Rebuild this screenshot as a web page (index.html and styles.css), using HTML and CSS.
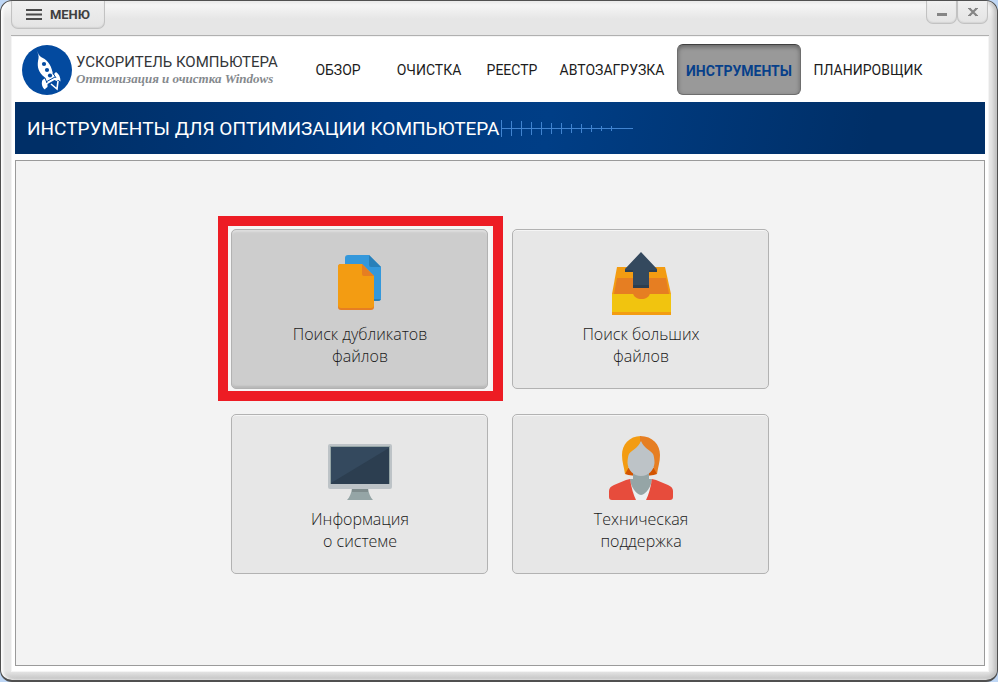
FILE: index.html
```html
<!DOCTYPE html>
<html lang="ru">
<head>
<meta charset="utf-8">
<title>Ускоритель компьютера</title>
<link rel="stylesheet" href="styles.css">
</head>
<body>
<div class="window">
  <header class="titlebar">
    <button class="tab menu" type="button">
      <svg width="16" height="11" viewBox="0 0 16 11"><path d="M0 1h16M0 5.500h16M0 10h16" stroke="#4a4a4a" stroke-width="1.800"/></svg>
      МЕНЮ
    </button>
    <div class="controls">
      <button class="tab control" type="button" aria-label="Свернуть"><svg width="10" height="10" viewBox="0 0 10 10"><path d="M0 7.500h10" stroke="#858585" stroke-width="3"/></svg></button>
      <button class="tab control" type="button" aria-label="Закрыть"><svg width="10" height="10" viewBox="0 0 10 10"><path d="M1.500 1.500l7 7M8.500 1.500l-7 7" stroke="#858585" stroke-width="2.200"/><path d="M0 1.500h3M7 1.500h3M0 8.500h3M7 8.500h3" stroke="#858585"/></svg></button>
    </div>
  </header>
  <main class="content">
    <div class="top">
      <a class="brand" href="#">
        <svg width="50" height="50" viewBox="0 0 50 50">
          <circle cx="25" cy="25" r="25" fill="#034a9f"/>
          <path fill="#fff" d="M14.500 5C16 8.500 17 10.500 19 12c5 2 10 7 11.500 15l.5 3 3-3c3 2 4.500 5 4.500 9.500l-2-1.500-2 1-2-1-7 4v3l-2 1.500-.5 1c-3-2-4-6-2.500-9.500l3-2-3-2.500c-5-5-5.500-11-4-17 .5-3-.5-5-2-8.500z"/>
          <g fill="#034a9f"><circle cx="22" cy="19" r="2.100"/><circle cx="25" cy="25" r="2.100"/><circle cx="28" cy="30.500" r="2.100"/></g>
          <path d="M24 37l9-5M23 33l2 5M31 28l3 5" stroke="#034a9f" fill="none"/>
          <path d="M29 39l6 5 1-8" stroke="#fff" stroke-width="1.600" fill="none"/>
        </svg>
        <span class="brand-text">
          <span class="brand-name">УСКОРИТЕЛЬ КОМПЬЮТЕРА</span>
          <span class="brand-sub">Оптимизация и очистка Windows</span>
        </span>
      </a>
      <nav class="nav">
        <a href="#">ОБЗОР</a>
        <a href="#">ОЧИСТКА</a>
        <a href="#">РЕЕСТР</a>
        <a href="#">АВТОЗАГРУЗКА</a>
        <a class="active" href="#" aria-current="page">ИНСТРУМЕНТЫ</a>
        <a href="#">ПЛАНИРОВЩИК</a>
      </nav>
    </div>
    <div class="banner">
      <h1>ИНСТРУМЕНТЫ ДЛЯ ОПТИМИЗАЦИИ КОМПЬЮТЕРА</h1>
      <svg width="132" height="18" viewBox="0 0 132 18" shape-rendering="crispEdges"><path d="M0 9.500h132M.5 1v17M10.500 2v15M20.500 2v15M30.500 3v13M40.500 3v13M50.500 4v11M60.500 4v11M70.500 5v9M80.500 5v9M90.500 6v7M100.500 7v5M110.500 7v5" stroke="#4184d0" fill="none"/></svg>
    </div>
    <section class="panel">
      <div class="tiles">
        <button class="tile selected" type="button">
          <svg width="64" height="64" viewBox="0 0 64 64">
            <path d="M20 4h21l12 12v31q0 3-3 3H20q-3 0-3-3V7q0-3 3-3z" fill="#3498db"/>
            <path d="M41 4l12 12H43q-2 0-2-2z" fill="#2980b9"/>
            <path d="M46 48h7q-.5 2-3 2h-4z" fill="#2980b9"/>
            <path d="M13 15h21l12 12v29q0 3-3 3H13q-3 0-3-3V16q0-3 3-3z" fill="#e67e22"/>
            <path d="M13 13h21l12 12v29q0 3-3 3H13q-3 0-3-3V16q0-3 3-3z" fill="#f39c12"/>
            <path d="M34 13l12 12H36q-2 0-2-2z" fill="#e67e22"/>
          </svg>
          <span>Поиск дубликатов<br>файлов</span>
          <i class="marker"></i>
        </button>
        <button class="tile" type="button">
          <svg width="64" height="64" viewBox="-1 0 64 64">
            <path d="M7 16h48l6 27v21H2V43z" fill="#f39c12"/>
            <path d="M7 27h49l3 16H4z" fill="#e67e22"/>
            <path d="M2 43h59v18H2z" fill="#f1c40f"/>
            <path d="M23 42h17c-1 8-16 8-17 0z" fill="#e67e22"/>
            <path d="M31 4l16 15v2h-8v16H23V21h-8v-2z" fill="#2c3e50"/>
            <path d="M31 1l16 17v1h-8v15H23V19h-8v-1z" fill="#34495e"/>
          </svg>
          <span>Поиск больших<br>файлов</span>
        </button>
        <button class="tile" type="button">
          <svg width="64" height="64" viewBox="0 0 64 64">
            <path d="M24 52h16q1 8 5 12H19q4-4 5-12z" fill="#95a5a6"/>
            <path d="M24 53h16v3H24z" fill="#7f8c8d"/>
            <rect y="8" width="64" height="45" rx="2" fill="#bdc3c7"/>
            <path d="M2 10h60v38H2z" fill="#95a5a6"/>
            <path d="M3 11h58v37H3z" fill="#34495e"/>
            <path d="M61 12v36H3v-1z" fill="#2c3e50"/>
          </svg>
          <span>Информация<br>о системе</span>
        </button>
        <button class="tile" type="button">
          <svg width="64" height="64" viewBox="0 0 64 64">
            <path d="M17 32h30l1 6q-6 2-16 2t-16-2z" fill="#d35400"/>
            <path d="M24 35h16v9H24z" fill="#95a5a6"/>
            <path d="M21 43h22l-4 21H27z" fill="#ecf0f1"/>
            <path d="M21 43h22c0 6-6 16-11 16s-11-10-11-16z" fill="#95a5a6"/>
            <path d="M21 43q2 13 6 21H3q-3 0-3-3v-6q0-4 5-6l12-5z" fill="#e74c3c"/>
            <path d="M43 43q-2 13-6 21h24q3 0 3-3v-6q0-4-5-6l-12-5z" fill="#e74c3c"/>
            <path d="M32 0C20 0 13 9 13 19c0 7 2 12 3 19l4-7 12-25z" fill="#f39c12"/>
            <path d="M31 0C44 0 51 9 51 19c0 7-2 12-3 19l-4-7L31 5z" fill="#e67e22"/>
            <path d="M32 5c3 7 9 9 12 13 1 2 1.500 6 1.500 9-.5 7-6 13-13.500 13s-13-6-13.500-13c0-3 .5-7 1.500-9 3-4 9-6 12-13z" fill="#bdc3c7"/>
          </svg>
          <span>Техническая<br>поддержка</span>
        </button>
      </div>
    </section>
  </main>
</div>
</body>
</html>
```
FILE: styles.css
```css
* {
  box-sizing: border-box;
}

body {
  margin: 0;
  background: #bfd7f5;
  font-family: Roboto, "Liberation Sans", sans-serif;
}

a {
  color: inherit;
  text-decoration: none;
}

button {
  font: inherit;
  color: inherit;
}

svg {
  display: block;
  flex: none;
}

.window {
  display: flex;
  flex-direction: column;
  min-height: 100vh;
  padding: 0 8px 8px 10px;
  border: 1px solid #505050;
  border-bottom-width: 2px;
  border-radius: 12px;
  background: linear-gradient(#fafafa, #e6e6e6 18px, #e6e6e6 calc(100% - 9px), #c4c4c4);
  box-shadow: inset 2px 0 3px #fff, inset -3px 0 4px #bbb;
}

.titlebar {
  display: flex;
  justify-content: space-between;
  align-items: flex-start;
  height: 35px;
  padding-right: 1px;
  border-bottom: 1px solid #b0b0b0;
}

.tab {
  display: flex;
  align-items: center;
  justify-content: center;
  padding: 0;
  border: 1px solid #c2c2c2;
  border-top: 0;
  border-radius: 0 0 7px 7px;
  background: linear-gradient(#f0f0f0, #e4e4e4);
  box-shadow: inset 0 -1px 1px #d4d4d4;
}

.menu {
  gap: 8px;
  width: 94px;
  height: 28px;
  color: #404040;
  font-size: 13px;
  font-weight: 700;
}

.controls {
  display: flex;
}

.control {
  width: 31px;
  height: 23px;
}

.content {
  display: flex;
  flex: 1;
  flex-direction: column;
  padding: 0 3px 5px;
  border: 1px solid #f4f4f4;
  background: #fff;
}

.top {
  display: flex;
  align-items: center;
  height: 65px;
}

.brand {
  display: flex;
  align-items: center;
  gap: 4px;
  width: 275px;
  padding-left: 7px;
}

.brand-text {
  display: flex;
  flex-direction: column;
  white-space: nowrap;
}

.brand-name {
  color: #333639;
  font-size: 15px;
  line-height: 17px;
}

.brand-sub {
  color: #85898d;
  font: italic bold 13px/15px "Liberation Serif", serif;
}

.nav {
  display: grid;
  grid-template-columns: 96px 86px 80px 120px 134px 124px;
  align-items: center;
  color: #1c1c1c;
  font-size: 14px;
  text-align: center;
}

.nav .active {
  margin: 0 5px;
  padding-top: 3px;
  border: 1px solid #6e6e6e;
  border-top-color: #404040;
  border-radius: 6px;
  background: #999;
  box-shadow: inset 0 2px 4px #666;
  color: #07408a;
  font-weight: 700;
  line-height: 46px;
}

.banner {
  display: flex;
  align-items: center;
  gap: 2px;
  height: 52px;
  padding-left: 12px;
  background: linear-gradient(100deg, #002f67 5%, #003b82 38%, #003e86 55%, #002f67 88%);
}

.banner h1 {
  margin: 0;
  color: #fff;
  font-size: 19px;
  font-weight: 400;
}

.panel {
  flex: 1;
  margin-top: 6px;
  padding: 68px 16px;
  border: 1px solid #9a9a9a;
  background: #f3f3f3;
}

.tiles {
  display: grid;
  grid-template-columns: 257px 257px;
  justify-content: center;
  gap: 25px 24px;
}

.tile {
  position: relative;
  display: flex;
  flex-direction: column;
  align-items: center;
  gap: 8px;
  height: 160px;
  padding: 21px 0 0 1px;
  border: 1px solid #b2b2b2;
  border-radius: 5px;
  background: #e7e7e7;
  box-shadow: inset 0 1px #f5f5f5;
  color: #1a1a1a;
  font: 300 16px/22px "Open Sans", sans-serif;
}

.tile.selected {
  background: #cdcdcd;
  box-shadow: inset 0 2px 2px #dedede, inset 0 -2px 2px #b8b8b8, 0 0 0 3px #f6f6f6;
}

.marker {
  position: absolute;
  inset: -14px -16px -13px -14px;
  border: 10px solid #ed1c24;
}
```
